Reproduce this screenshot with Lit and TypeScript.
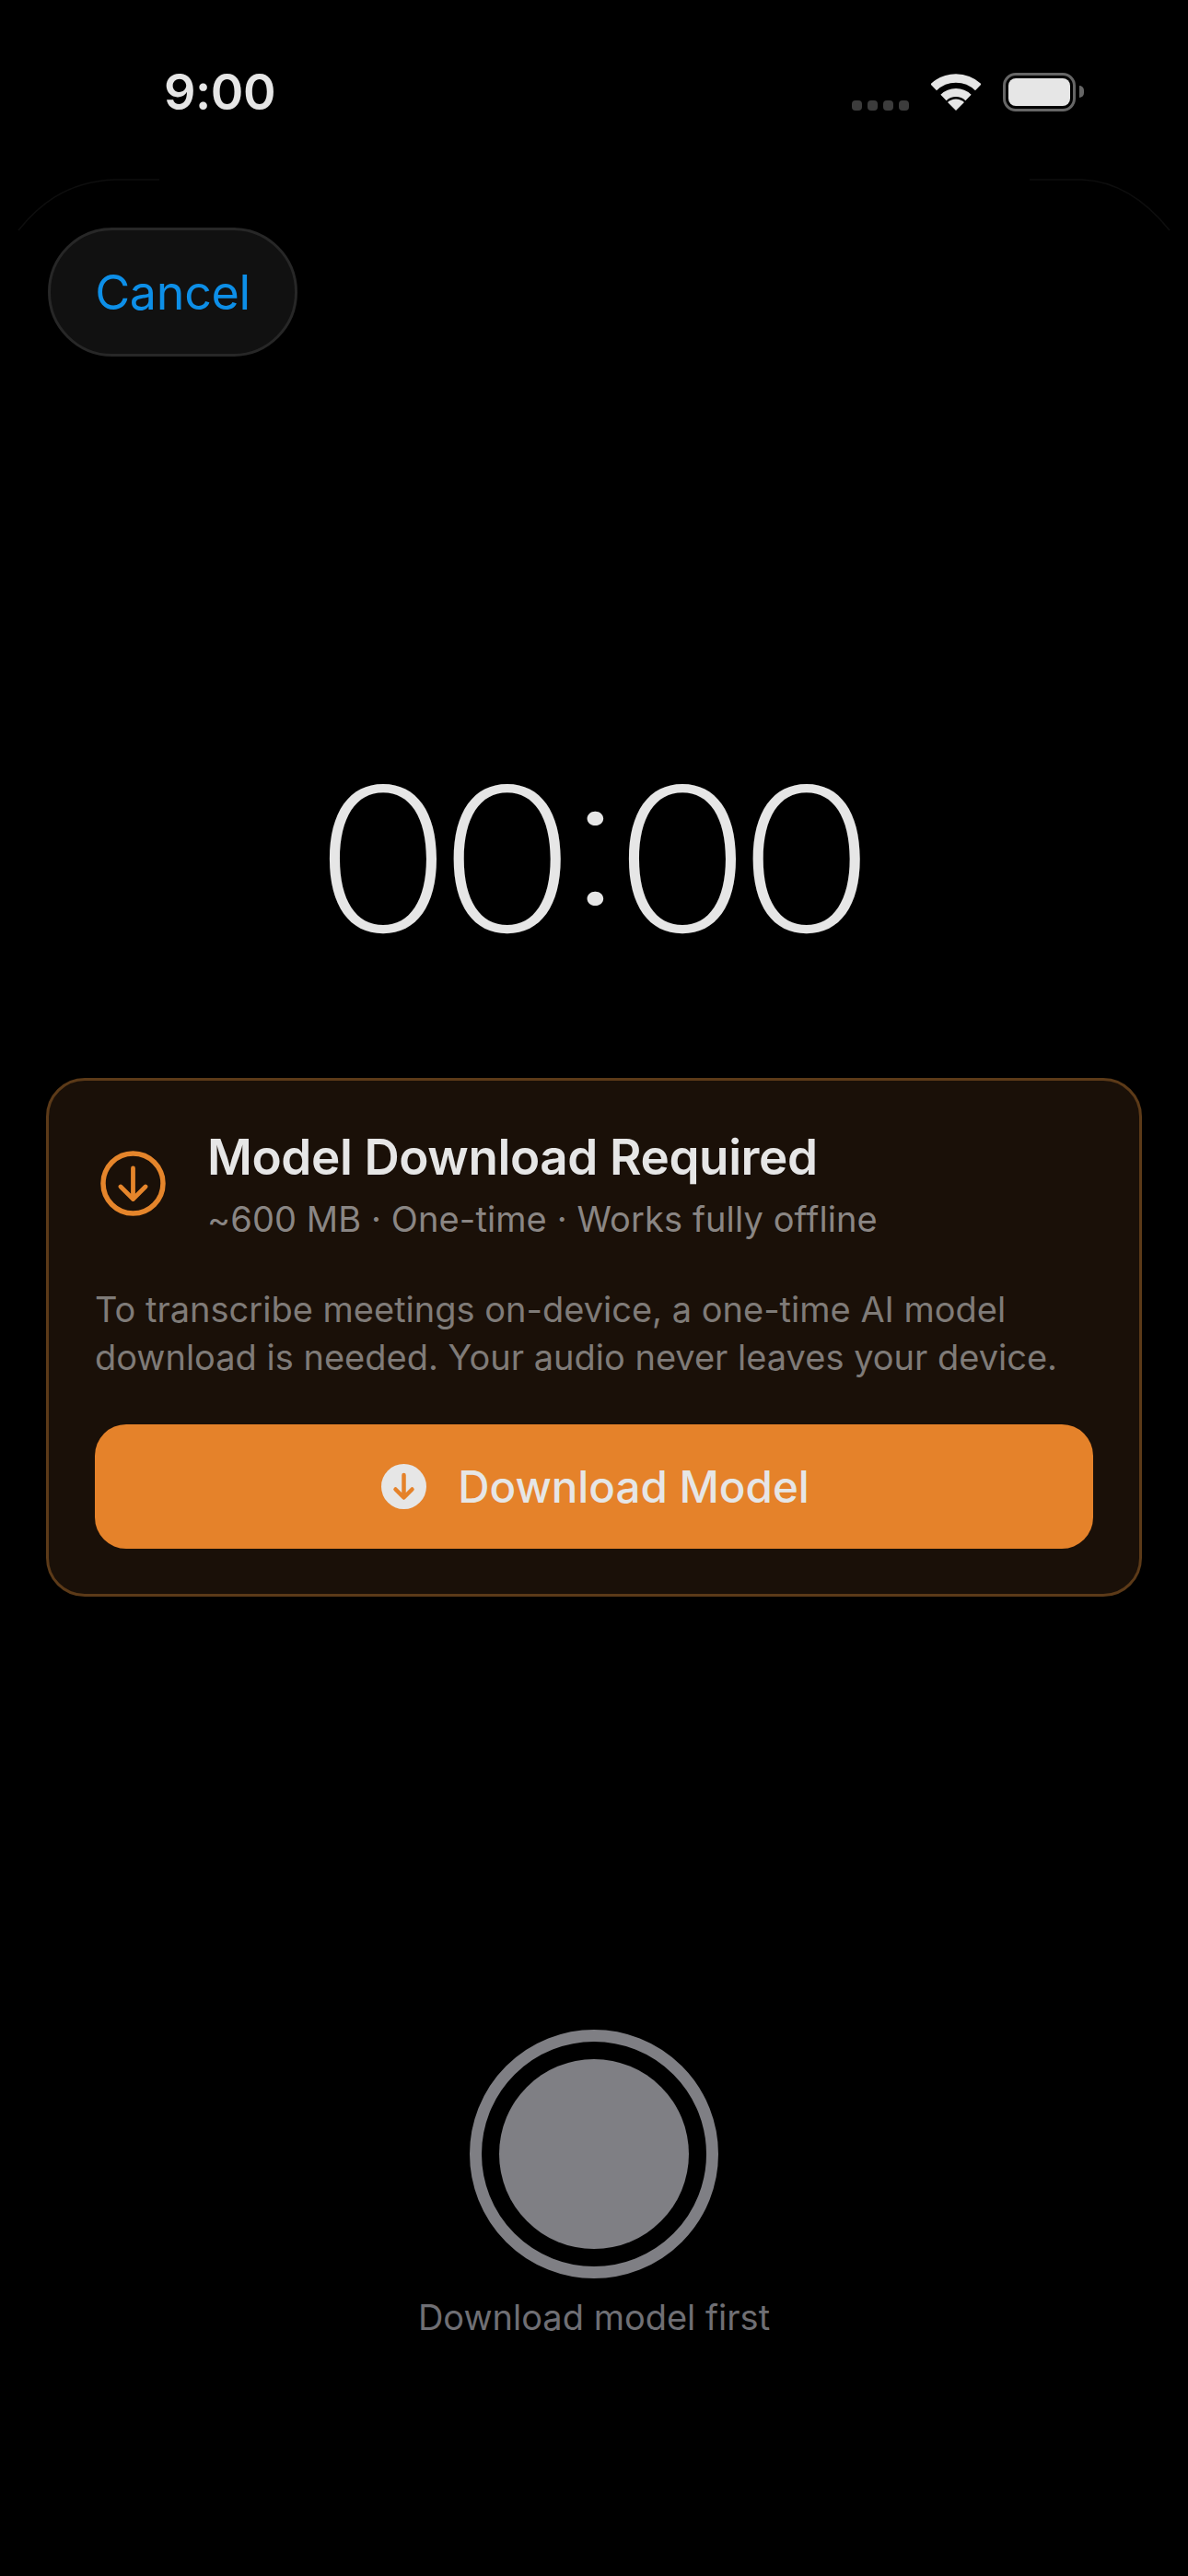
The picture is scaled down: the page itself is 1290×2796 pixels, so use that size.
import { LitElement, html, css } from "lit";
import { customElement } from "lit/decorators.js";

@customElement("app-root")
export class AppRoot extends LitElement {
  static styles = css`
    :host {
      display: block;
      background: #000;
      color: #e6e6e6;
      font-family: Inter, "Noto Sans", sans-serif;
    }
    .screen {
      position: relative;
      height: 2796px;
      display: flex;
      flex-direction: column;
      overflow: hidden;
    }

    /* barely visible edge of the sheet behind the cancel button */
    .sheet-edge {
      position: absolute;
      top: 190px;
      left: 0;
    }

    .status {
      height: 247px;
      flex: none;
      display: flex;
      align-items: flex-start;
      padding: 79px 113px 0 178px;
      box-sizing: border-box;
    }
    .clock {
      font-size: 54px;
      line-height: 42px;
      font-weight: 600;
      letter-spacing: -0.5px;
    }
    .status-icons {
      margin-left: auto;
      display: flex;
      align-items: flex-start;
    }
    .signal {
      display: flex;
      gap: 6px;
      margin-top: 30px;
    }
    .signal i {
      width: 11px;
      height: 11px;
      border-radius: 4px;
      background: #3c3c3c;
    }
    .wifi {
      margin: 1px 24px 0 24px;
    }
    .battery {
      width: 79px;
      height: 42px;
      box-sizing: border-box;
      border: 3.5px solid #666;
      border-radius: 14px;
      padding: 3px;
    }
    .battery b {
      display: block;
      height: 100%;
      background: #e6e6e6;
      border-radius: 8px;
    }
    .nub {
      width: 5px;
      height: 13px;
      margin: 14px 0 0 4px;
      background: #666;
      border-radius: 0 6px 6px 0;
    }

    .cancel {
      flex: none;
      align-self: flex-start;
      margin-left: 52px;
      width: 271px;
      height: 140px;
      box-sizing: border-box;
      border: 3px solid #272727;
      border-radius: 70px;
      background: #111;
      color: #0d8fe8;
      font: 400 52px Inter, sans-serif;
      letter-spacing: -0.3px;
      display: flex;
      align-items: center;
      justify-content: center;
    }

    /* Inter's zero is narrower than the reference's, so widen the whole line */
    .timer {
      flex: none;
      margin-top: 430px;
      height: 230px;
      line-height: 230px;
      text-align: center;
      white-space: nowrap;
      font-size: 217px;
      font-weight: 200;
      font-variant-numeric: tabular-nums;
      letter-spacing: -22.5px;
      padding-right: 21px;
      transform: scaleX(1.145);
    }
    .colon {
      display: inline-block;
      width: 48.5px;
      margin: 0 -1.5px 0 1.5px;
      text-align: center;
      letter-spacing: -20px;
      font-size: 195px;
      font-weight: 160;
      vertical-align: 29px;
      line-height: 0;
    }

    .card {
      flex: none;
      margin: 123px 50px 0;
      height: 563px;
      box-sizing: border-box;
      border: 3px solid #5c3a18;
      border-radius: 42px;
      background: #1a1008;
      padding: 0 50px;
    }
    .head {
      display: flex;
      align-items: flex-start;
      padding-top: 51px;
      height: 175px;
      box-sizing: border-box;
    }
    .head svg {
      flex: none;
      margin: 25px 0 0 6px;
    }
    .head-text {
      margin-left: 45px;
    }
    .title {
      font-size: 53px;
      line-height: 64px;
      font-weight: 600;
      letter-spacing: -0.4px;
    }
    .sub {
      font-size: 38px;
      line-height: 48px;
      margin-top: 11px;
      color: #8a8684;
      letter-spacing: 0.1px;
    }
    .desc {
      font-size: 38px;
      line-height: 52px;
      color: #7f7b78;
      margin-top: 47px;
      white-space: nowrap;
    }
    .download {
      margin-top: 47px;
      height: 135px;
      border-radius: 34px;
      background: #e5822a;
      display: flex;
      align-items: center;
      justify-content: center;
      gap: 34px;
      padding-left: 3px;
      font-size: 47.5px;
      font-weight: 500;
    }

    .record {
      flex: none;
      margin: 470px auto 0;
      width: 270px;
      height: 270px;
      box-sizing: border-box;
      border: 13px solid #7f7f84;
      border-radius: 50%;
      padding: 19px;
    }
    .record i {
      display: block;
      height: 100%;
      border-radius: 50%;
      background: #7f7f84;
    }
    .hint {
      flex: none;
      margin-top: 14px;
      text-align: center;
      font-size: 38px;
      line-height: 56px;
      color: #6f6f74;
    }
  `;

  render() {
    return html`
      <div class="screen">
        <svg class="sheet-edge" width="1290" height="62" viewBox="0 0 1290 62" fill="none" stroke="#0e0e0e" stroke-width="1.5">
          <path d="M20 60C40 35 70 7 125 5H173" />
          <path d="M1118 5H1175C1220 7 1250 35 1270 60" />
        </svg>

        <div class="status">
          <span class="clock">9:00</span>
          <div class="status-icons">
            <div class="signal"><i></i><i></i><i></i><i></i></div>
            <svg class="wifi" width="54" height="40" viewBox="0 0 54 40" fill="none" stroke="#e6e6e6">
              <path d="M2.7 14.8a35 35 0 0 1 48.6 0" stroke-width="9.5" />
              <path d="M13.5 26a19.5 19.5 0 0 1 27 0" stroke-width="9" />
              <path d="M18 31a13 13 0 0 1 18 0l-9 9z" fill="#e6e6e6" stroke="none" />
            </svg>
            <div class="battery"><b></b></div>
            <div class="nub"></div>
          </div>
        </div>

        <div class="cancel">Cancel</div>

        <div class="timer">00<span class="colon">:</span>00</div>

        <div class="card">
          <div class="head">
            <svg width="71" height="71" viewBox="0 0 71 71" fill="none" stroke="#e5852b" stroke-linecap="round" stroke-linejoin="round">
              <circle cx="35.5" cy="35.5" r="32.5" stroke-width="5.5" />
              <path d="M35.5 19v33.5M22 39l13.5 13.5L49 39" stroke-width="4.8" />
            </svg>
            <div class="head-text">
              <div class="title">Model Download Required</div>
              <div class="sub">~600 MB · One-time · Works fully offline</div>
            </div>
          </div>
          <div class="desc">
            To transcribe meetings on-device, a one-time AI model<br />
            download is needed. Your audio never leaves your device.
          </div>
          <div class="download">
            <svg width="49" height="49" viewBox="0 0 49 49" fill="none">
              <circle cx="24.5" cy="24.5" r="24.5" fill="#e6e6e6" />
              <path d="M24.5 12v24M15.5 27.5l9 9 9-9" stroke="#e5822a" stroke-width="4.5" stroke-linecap="round" stroke-linejoin="round" />
            </svg>
            <span>Download Model</span>
          </div>
        </div>

        <div class="record"><i></i></div>
        <div class="hint">Download model first</div>
      </div>
    `;
  }
}
